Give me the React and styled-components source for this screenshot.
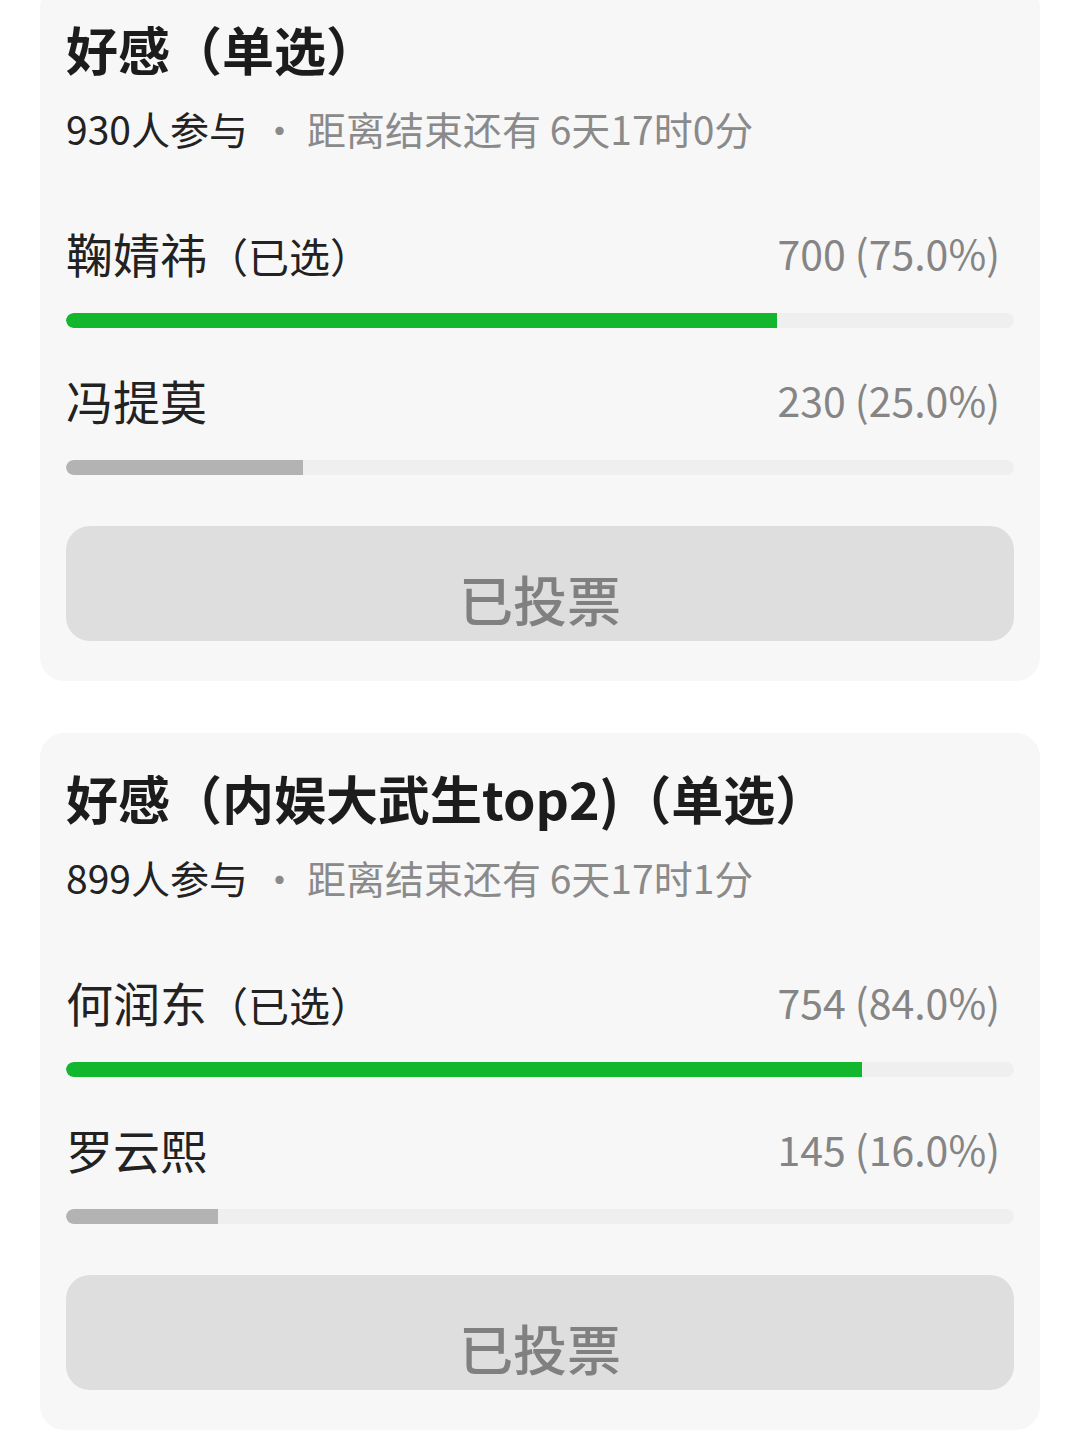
import React from "react";
import styled, { createGlobalStyle } from "styled-components";

const GlobalStyle = createGlobalStyle`
  body {
    margin: 0;
    background: #ffffff;
    font-family: "Noto Sans CJK SC", "Noto Sans", sans-serif;
  }
`;

const polls = [
  {
    title: "好感（单选）",
    count: 930,
    left: "6天17时0分",
    options: [
      { name: "鞠婧祎", votes: 700, pct: 75.0, chosen: true },
      { name: "冯提莫", votes: 230, pct: 25.0, chosen: false },
    ],
  },
  {
    title: "好感（内娱大武生top2)（单选）",
    count: 899,
    left: "6天17时1分",
    options: [
      { name: "何润东", votes: 754, pct: 84.0, chosen: true },
      { name: "罗云熙", votes: 145, pct: 16.0, chosen: false },
    ],
  },
];

function Poll({ poll }) {
  return (
    <Card>
      <Title>{poll.title}</Title>
      <Meta>
        <Joined>{poll.count}人参与</Joined>
        <Dot>·</Dot>
        距离结束还有 {poll.left}
      </Meta>
      {poll.options.map((opt, i) => (
        <Option key={opt.name} $first={i === 0}>
          <OptionHead>
            <Name>
              {opt.name}
              {opt.chosen && <Chosen>（已选）</Chosen>}
            </Name>
            <Votes>
              {opt.votes} ({opt.pct.toFixed(1)}%)
            </Votes>
          </OptionHead>
          <Track>
            <Fill $chosen={opt.chosen} style={{ width: `${opt.pct}%` }} />
          </Track>
        </Option>
      ))}
      <VotedButton>已投票</VotedButton>
    </Card>
  );
}

export default function App() {
  return (
    <>
      <GlobalStyle />
      <Page>
        {polls.map((p) => (
          <Poll key={p.title} poll={p} />
        ))}
      </Page>
    </>
  );
}

const Page = styled.div`
  display: flex;
  flex-direction: column;
  gap: 52px;
  padding: 0 40px;
  margin-top: -16px;
`;

const Card = styled.div`
  display: flex;
  flex-direction: column;
  background: #f7f7f7;
  border-radius: 24px;
  padding: 34px 26px 40px;
`;

const Title = styled.div`
  font-size: 52px;
  line-height: 62px;
  font-weight: 700;
  color: #1c1c1c;
  white-space: nowrap;
`;

const Meta = styled.div`
  margin-top: 25px;
  font-size: 39px;
  line-height: 46px;
  color: #8a8a8a;
  white-space: nowrap;
`;

const Joined = styled.span`
  color: #222222;
`;

const Dot = styled.span`
  display: inline-block;
  margin: 0 8px 0 12px;
`;

const Option = styled.div`
  margin-top: ${(p) => (p.$first ? "76px" : "46px")};
`;

const OptionHead = styled.div`
  display: flex;
  justify-content: space-between;
  align-items: center;
  height: 56px;
  box-sizing: border-box;
  padding-bottom: 6px;
`;

const Name = styled.div`
  font-size: 47px;
  color: #222222;
  white-space: nowrap;
`;

const Chosen = styled.span`
  font-size: 41px;
`;

const Votes = styled.div`
  font-size: 41px;
  color: #858585;
  white-space: nowrap;
  margin-right: 14px;
`;

const Track = styled.div`
  margin-top: 30px;
  height: 15px;
  border-radius: 8px;
  background: #efefef;
  overflow: hidden;
`;

const Fill = styled.div`
  height: 100%;
  border-radius: 8px 0 0 8px;
  background: ${(p) => (p.$chosen ? "#13b72e" : "#b3b3b3")};
`;

const VotedButton = styled.div`
  margin-top: 51px;
  height: 115px;
  box-sizing: border-box;
  padding-top: 30px;
  display: flex;
  align-items: center;
  justify-content: center;
  border-radius: 24px;
  background: #dedede;
  color: #808080;
  font-size: 54px;
  font-weight: 500;
`;
